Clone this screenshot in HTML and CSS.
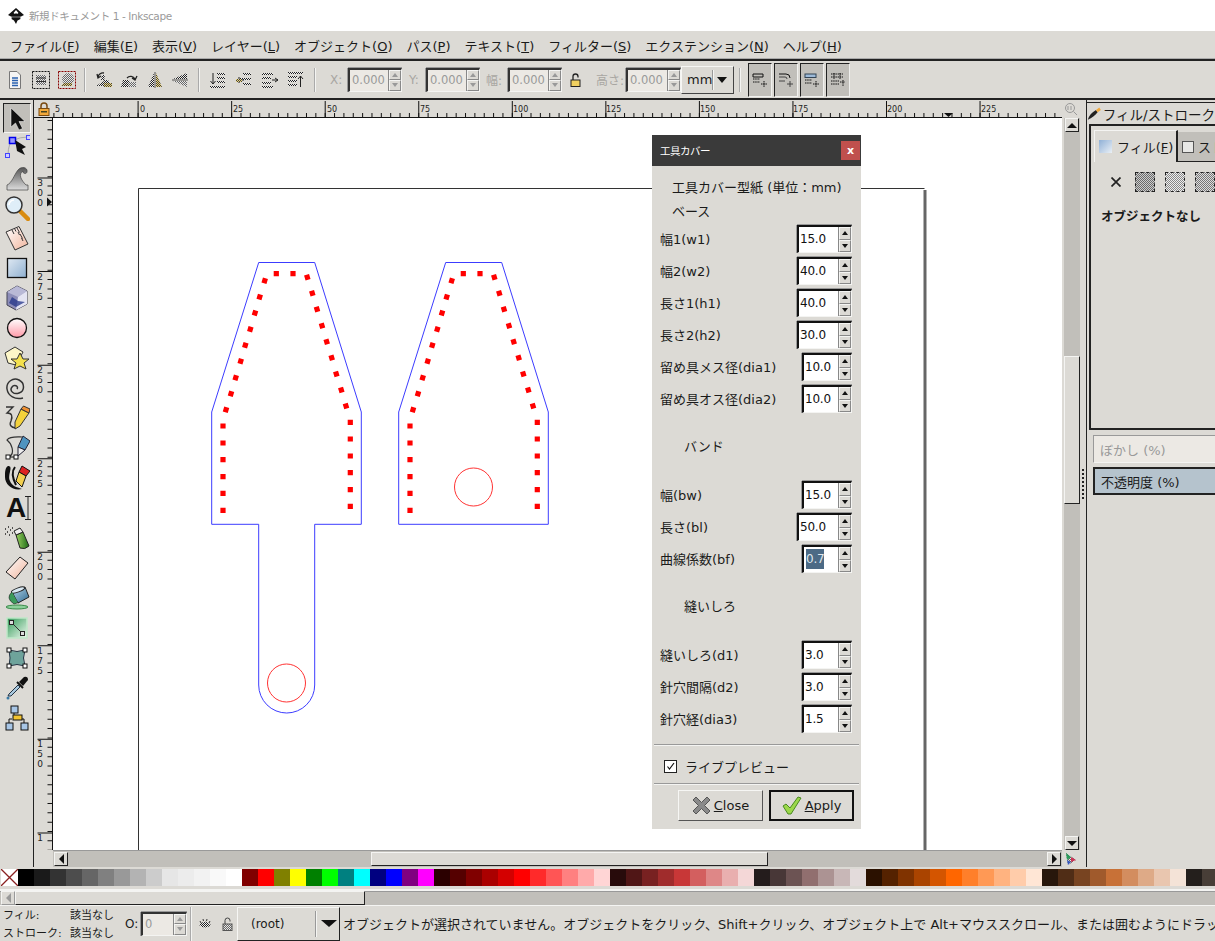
FILE: index.html
```html
<!DOCTYPE html>
<html lang="ja">
<head>
<meta charset="utf-8">
<title>新規ドキュメント 1 - Inkscape</title>
<link rel="stylesheet" href="styles.css">
</head>
<body>
<svg class="defs" width="0" height="0">
  <defs>
    <pattern id="dith" width="2" height="2" patternUnits="userSpaceOnUse"><rect width="2" height="2" fill="#eee"/><rect width="1" height="1" fill="#222"/><rect x="1" y="1" width="1" height="1" fill="#222"/></pattern>
    <pattern id="dithy" width="2" height="2" patternUnits="userSpaceOnUse"><rect width="2" height="2" fill="#f0d878"/><rect width="1" height="1" fill="#444"/><rect x="1" y="1" width="1" height="1" fill="#444"/></pattern>
    <pattern id="dithl" width="2" height="2" patternUnits="userSpaceOnUse"><rect width="2" height="2" fill="#e8e8e8"/><rect width="1" height="1" fill="#666"/><rect x="1" y="1" width="1" height="1" fill="#666"/></pattern>
    <linearGradient id="gBlue" x1="0" y1="0" x2="1" y2="1"><stop offset="0" stop-color="#dfe9f3"/><stop offset="1" stop-color="#8fb0d0"/></linearGradient>
    <linearGradient id="gPink" x1="0" y1="0" x2="0" y2="1"><stop offset="0" stop-color="#fff"/><stop offset="1" stop-color="#ff9aa8"/></linearGradient>
    <linearGradient id="gGray" x1="0" y1="0" x2="0" y2="1"><stop offset="0" stop-color="#555"/><stop offset="1" stop-color="#ddd"/></linearGradient>
    <linearGradient id="gSalmon" x1="0" y1="0" x2="1" y2="1"><stop offset="0" stop-color="#fff"/><stop offset="1" stop-color="#f0b49c"/></linearGradient>
    <linearGradient id="gGreen" x1="0" y1="0" x2="1" y2="1"><stop offset="0" stop-color="#2e9a55"/><stop offset="1" stop-color="#f0f8f0"/></linearGradient>
    <linearGradient id="gCan" x1="0" y1="0" x2="1" y2="0"><stop offset="0" stop-color="#9ad060"/><stop offset="1" stop-color="#1d6a16"/></linearGradient>
    <linearGradient id="gBucket" x1="0" y1="0" x2="1" y2="1"><stop offset="0" stop-color="#b8d8ec"/><stop offset="1" stop-color="#2f6a90"/></linearGradient>
  </defs>
</svg>

<header class="titlebar">
  <svg class="app-logo" width="16" height="16" viewBox="0 0 16 16"><path d="M8 0 L16 7 L12 9 L12.500 11 L9.500 12.500 L8 16 L6 12.500 L3.500 11 L4 9 L0 7 Z" fill="#111"/><path d="M8 2 L10.500 5 L9 6 L8 5 L7 6 L5.500 5 Z" fill="#fff"/><path d="M3 8.500 H13 V9.500 H3 Z" fill="#888"/></svg>
  <span class="title-text">新規ドキュメント 1 - Inkscape</span>
</header>

<nav class="menubar">
  <span>ファイル(<u>F</u>)</span><span>編集(<u>E</u>)</span><span>表示(<u>V</u>)</span><span>レイヤー(<u>L</u>)</span><span>オブジェクト(<u>O</u>)</span><span>パス(<u>P</u>)</span><span>テキスト(<u>T</u>)</span><span>フィルター(<u>S</u>)</span><span>エクステンション(<u>N</u>)</span><span>ヘルプ(<u>H</u>)</span>
</nav>

<div class="toolbar">
  <span class="ti"><svg width="16" height="18" viewBox="0 0 16 18"><path d="M2.500 .5 H10 L13.500 4 V17.500 H2.500 Z" fill="#f4f4f4" stroke="#777"/><path d="M5 7 H11 M5 9.500 H11 M5 12 H11 M5 14.500 H11" stroke="#2a62b0" stroke-width="1.400"/></svg></span>
  <span class="ti"><svg width="18" height="18" viewBox="0 0 18 18"><rect x=".5" y=".5" width="17" height="17" fill="none" stroke="#111" stroke-dasharray="2 1"/><path d="M4 4 H14 V14 H4 Z" fill="url(#dithl)"/><path d="M4 7 H14 M4 10.500 H14" stroke="#333"/></svg></span>
  <span class="ti"><svg width="18" height="18" viewBox="0 0 18 18"><rect x=".5" y=".5" width="17" height="17" fill="none" stroke="#800" stroke-dasharray="2 1"/><circle cx="10" cy="8" r="6" fill="url(#dithl)"/><path d="M3 15 H14 V12 H6 Z" fill="url(#dithy)"/></svg></span>
  <span class="tsep first"></span>
  <span class="ti alt"><svg width="18" height="18" viewBox="0 0 18 18"><path d="M1 15 H17 L13 9 H6 L7 4 H10 L9 10 Z" fill="url(#dith)"/><path d="M3 6 A5 5 0 0 1 9 2 M2 3 L3 7 L6 5" fill="none" stroke="#222" stroke-width="1.300"/><rect x="9" y="12" width="8" height="4" fill="url(#dithy)"/></svg></span>
  <span class="ti alt"><svg width="18" height="18" viewBox="0 0 18 18"><path d="M1 16 H11 L9 9 H3 Z" fill="url(#dith)"/><path d="M7 7 A5 5 0 0 1 15 8 M17 5 L15 9 L12 7" fill="none" stroke="#222" stroke-width="1.300"/><rect x="8" y="11" width="8" height="5" fill="url(#dithl)"/></svg></span>
  <span class="ti alt"><svg width="16" height="16" viewBox="0 0 16 16"><path d="M7 1 V15 H1 Z" fill="url(#dith)"/><path d="M9 1 V15 H15 Z" fill="url(#dithy)"/><path d="M8 0 V16" stroke="#555"/></svg></span>
  <span class="ti alt"><svg width="16" height="16" viewBox="0 0 16 16"><path d="M15 1 V7 H1 Z" fill="url(#dith)"/><path d="M15 15 V9 H1 Z" fill="url(#dithl)"/><path d="M0 8 H16" stroke="#555"/></svg></span>
  <span class="tsep second"></span>
  <span class="ti"><svg width="16" height="16" viewBox="0 0 16 16"><path d="M3 1 V12 M.5 9 L3 12 L5.500 9" fill="none" stroke="#222"/><path d="M7 1 H15 V3 H7 Z M7 5 H15 V7 H7 Z M7 9 H15 V11 H7 Z M0 14 H15 V16 H0 Z" fill="url(#dith)"/></svg></span>
  <span class="ti"><svg width="16" height="16" viewBox="0 0 16 16"><path d="M3 6 H15 V8 H3 Z M7 1 H15 V3 H7 Z M7 11 H15 V13 H7 Z" fill="url(#dith)"/><path d="M0 8 H8 M3 5 V11" stroke="#222"/><rect x="0" y="7" width="6" height="3" fill="url(#dithy)"/></svg></span>
  <span class="ti"><svg width="16" height="16" viewBox="0 0 16 16"><path d="M0 1 H11 V3 H0 Z M0 5 H9 V7 H0 Z M0 10 H9 V12 H0 Z M0 14 H11 V16 H0 Z" fill="url(#dith)"/><path d="M10 8 H16 M13 6 L16 8 L13 10" fill="none" stroke="#222"/></svg></span>
  <span class="ti"><svg width="16" height="16" viewBox="0 0 16 16"><path d="M0 0 H15 V2 H0 Z M0 4 H9 V6 H0 Z M0 8 H9 V10 H0 Z M0 12 H9 V14 H0 Z" fill="url(#dith)"/><path d="M12.500 15 V4 M10 7 L12.500 4 L15 7" fill="none" stroke="#222"/></svg></span>
  <span class="tsep third"></span>
  <span class="tlabel lx">X:</span>
  <span class="spin dis w54"><span class="val">0.000</span><span class="btns"><i class="up"></i><i class="dn"></i></span></span>
  <span class="tlabel ly">Y:</span>
  <span class="spin dis w54"><span class="val">0.000</span><span class="btns"><i class="up"></i><i class="dn"></i></span></span>
  <span class="tlabel lw">幅:</span>
  <span class="spin dis w54"><span class="val">0.000</span><span class="btns"><i class="up"></i><i class="dn"></i></span></span>
  <span class="tlock"><svg width="11" height="14" viewBox="0 0 11 14"><path d="M3 7 V3.500 A2.500 2.500 0 0 1 8 3.500 V4.500" fill="none" stroke="#222" stroke-width="1.300"/><rect x="1" y="7" width="9" height="6.500" fill="#f0d060" stroke="#222"/></svg></span>
  <span class="tlabel lh">高さ:</span>
  <span class="spin dis w55"><span class="val">0.000</span><span class="btns"><i class="up"></i><i class="dn"></i></span></span>
  <span class="unit"><span class="unit-text">mm</span><i class="unit-sep"></i><i class="tri-d big"></i></span>
  <span class="tsep fourth"></span>
  <span class="toggles">
    <span class="tog"><svg width="16" height="14" viewBox="0 0 16 14"><path d="M1 1 H11 V4 H1 Z" fill="none" stroke="#111"/><path d="M1 6 H8 M1 9 H8 M9 11 H15 M12 8 V14" stroke="#111" stroke-dasharray="1.500 .7"/></svg></span>
    <span class="tog"><svg width="16" height="14" viewBox="0 0 16 14"><path d="M1 1 H8 Q12 1 12 5" fill="none" stroke="#111"/><path d="M1 4 H7 Q9 4 9 6 M1 8 H7 M9 11 H15 M12 8 V14" fill="none" stroke="#444"/></svg></span>
    <span class="tog"><svg width="16" height="14" viewBox="0 0 16 14"><rect x="1" y="1" width="11" height="3.500" fill="#9dbad8" stroke="#345"/><path d="M1 7 H8 M1 10 H8 M9 11 H15 M12 8 V14" stroke="#111" stroke-dasharray="1.500 .7"/></svg></span>
    <span class="tog"><svg width="16" height="14" viewBox="0 0 16 14"><path d="M1 1 H13 M1 4 H13 M1 8 H9 M1 11 H9 M4 0 V6 M10 0 V6 M10 9 H15 M13 7 V13" stroke="#111" stroke-dasharray="1.500 .7"/></svg></span>
  </span>
</div>

<main class="workspace">
  <aside class="toolbox">
    <span class="tool active"><svg width="24" height="24" viewBox="0 0 24 24"><path d="M6 2 V21 L10.500 17 L14 24 L17.500 22.500 L14 15.500 L20 15.500 Z" fill="#111" stroke="#fff" stroke-width=".5"/></svg></span>
    <span class="tool"><svg width="26" height="26" viewBox="0 0 26 26"><path d="M4 21 Q4 7 10 5 Q16 2 24 2" fill="none" stroke="#aaa"/><rect x="1.500" y="18.500" width="4" height="4" fill="#cfcfff" stroke="#44f"/><rect x="22.500" y=".5" width="4" height="4" fill="#cfcfff" stroke="#44f"/><rect x="5.500" y="2.500" width="6" height="6" fill="#99f" stroke="#00e" stroke-width="1.500"/><path d="M11 5 L22 12 L18 14 L21 20 L13 16 Z" fill="#111"/></svg></span>
    <span class="tool"><svg width="26" height="26" viewBox="0 0 26 26"><path d="M3 25 V20 C8 18 10 10 14 5 C17 1 24 2 23 7 C22 10 18 8 19 6 C14 9 17 15 22 20 H24 V25 Z" fill="url(#gGray)" stroke="#444" stroke-width=".7"/></svg></span>
    <span class="tool"><svg width="26" height="26" viewBox="0 0 26 26"><path d="M15 15 L24 24" stroke="#d98c10" stroke-width="4.500" stroke-linecap="round"/><circle cx="10" cy="10" r="8" fill="#dfeef8" stroke="#333" stroke-width="1.500"/><path d="M5 10 A5 5 0 0 1 10 5" fill="none" stroke="#fff" stroke-width="1.500"/></svg></span>
    <span class="tool"><svg width="26" height="26" viewBox="0 0 26 26"><path d="M2 7 L15 1.500 L24 19 L11 25 Z" fill="url(#gSalmon)" stroke="#333"/><path d="M8 5 L10 9 M10.500 3.500 L12 6.500 M13 3 L15.500 7.500 M14 7 L15.500 10 M16 9 L18.500 13.500 M17.500 13 L19 16" stroke="#333" fill="none"/></svg></span>
    <span class="tool"><svg width="22" height="22" viewBox="0 0 22 22"><rect x="1.500" y="1.500" width="19" height="19" fill="url(#gBlue)" stroke="#111" stroke-width="1.300"/></svg></span>
    <span class="tool"><svg width="24" height="26" viewBox="0 0 24 26"><path d="M12 1 L22 6 V19 L11 25 L2 20 V7 Z" fill="#8d8db8" stroke="#445" /><path d="M12 1 L22 6 L13 12 L2 7 Z" fill="#b9b9d6"/><path d="M13 12 L22 6 V19 L11 25 Z" fill="#e4e4f2"/><path d="M7 12 L13 16 L20 17 L11 22 L4 18 Z" fill="#223388" opacity=".75"/></svg></span>
    <span class="tool"><svg width="22" height="22" viewBox="0 0 22 22"><circle cx="11" cy="11" r="9.500" fill="url(#gPink)" stroke="#111" stroke-width="1.300"/></svg></span>
    <span class="tool"><svg width="26" height="24" viewBox="0 0 26 24"><path d="M1 7 L11 1 L19 6 L12 19 L4 17 Z" fill="#fdf6c8" stroke="#333"/><path d="M16 7 L19 13 L25 13 L20 17 L22 23 L16 20 L10 23 L12 17 L7 13 L13 13 Z" fill="#f4e14e" stroke="#333"/></svg></span>
    <span class="tool"><svg width="24" height="24" viewBox="0 0 24 24"><path d="M12 13 C14 10 9 8 7 11 C4 15 9 19 14 17 C20 15 20 7 14 4 C8 1 1 6 2 13 C3 20 10 24 18 22" fill="none" stroke="#333" stroke-width="1.500"/></svg></span>
    <span class="tool"><svg width="26" height="26" viewBox="0 0 26 26"><path d="M2 2 H9 L3 8 Q10 8 7 16 Q4 22 12 23" fill="none" stroke="#333" stroke-width="1.400"/><path d="M17 4 L25 8 L16 21 L11 24 L11 17 Z" fill="#f4d23c" stroke="#333"/><path d="M17 4 L19.500 1 L26 4 L25 8 Z" fill="#f09030" stroke="#333"/></svg></span>
    <span class="tool"><svg width="26" height="26" viewBox="0 0 26 26"><path d="M5 22 C12 18 7 8 3 5 C6 1 14 2 18 2" fill="none" stroke="#333" stroke-width="1.200"/><rect x="2" y="20" width="4" height="4" fill="#fff" stroke="#111"/><rect x="10" y="20" width="4" height="4" fill="#fff" stroke="#111"/><path d="M6 22 H10" stroke="#111"/><path d="M19 1 L26 6 L21 15 L14 12 Z" fill="#4f94c0" stroke="#223"/><path d="M14 12 L21 15 L14 21 Z" fill="#eee" stroke="#223"/></svg></span>
    <span class="tool"><svg width="26" height="26" viewBox="0 0 26 26"><path d="M4 1 C10 1 3 10 6 16 C8 21 12 22 18 24 C9 26 1 20 1 12 C1 7 1 3 4 1 Z" fill="#111"/><path d="M11 2 C7 7 9 14 12 20" fill="none" stroke="#111" stroke-width="2"/><path d="M18 1 L26 6 L22 11 L15 7 Z" fill="#d22" stroke="#111"/><path d="M15 7 L22 11 L18 22 L12 16 Z" fill="#f2cf50" stroke="#111"/></svg></span>
    <span class="tool tool-a"><span class="a-glyph">A</span><svg class="ibeam" width="7" height="24" viewBox="0 0 7 24"><path d="M0 .5 H6 M0 23.500 H6 M3 0 V24" stroke="#222" fill="none"/></svg></span>
    <span class="tool"><svg width="26" height="24" viewBox="0 0 26 24"><path d="M1 3 H2 M4 1 H5 M6 4 H7 M3 6 H4 M8 7 H9 M5 9 H6 M8 2 H9 M1 8 H2" stroke="#222" stroke-width="1.500"/><path d="M12 9 L19 6 L25 20 Q21 24 16 22 Z" fill="url(#gCan)" stroke="#222"/><path d="M10 5 L16 2 L19 6 L12 9 Z" fill="#eee" stroke="#222"/></svg></span>
    <span class="tool"><svg width="24" height="24" viewBox="0 0 24 24"><path d="M1 16 L15 1 L23 7 L10 23 Z" fill="url(#gSalmon)" stroke="#222"/></svg></span>
    <span class="tool"><svg width="26" height="24" viewBox="0 0 26 24"><path d="M8 6 L21 1 L25 11 L14 17 Z" fill="url(#gBucket)" stroke="#222"/><ellipse cx="14" cy="4" rx="7" ry="2" fill="#d8e8f2" stroke="#222" transform="rotate(-20 14 4)"/><path d="M8 6 Q1 12 10 18 Q16 16 14 17" fill="#3a9a5a" stroke="#222" stroke-width=".6"/><ellipse cx="13" cy="21" rx="11" ry="2" fill="#8cd09a" stroke="#3a8a4a"/></svg></span>
    <span class="tool"><svg class="grad-ic" width="22" height="22" viewBox="0 0 22 22"><rect x="1" y="1" width="20" height="20" fill="url(#gGreen)" stroke="#bfe8c8" stroke-width="1.500"/><path d="M6 6 L16 16" stroke="#333"/><rect x="3.500" y="3.500" width="4" height="4" fill="#ddd" stroke="#222"/><rect x="14.500" y="14.500" width="4" height="4" fill="#ddd" stroke="#222"/></svg></span>
    <span class="tool"><svg width="24" height="24" viewBox="0 0 24 24"><path d="M4 4 Q12 7 20 4 Q17 12 20 20 Q12 17 4 20 Q6 12 4 4 Z" fill="#6ea39b" stroke="#234"/><rect x="2" y="2" width="4" height="4" fill="#fff" stroke="#111"/><rect x="18" y="2" width="4" height="4" fill="#fff" stroke="#111"/><rect x="2" y="18" width="4" height="4" fill="#fff" stroke="#111"/><rect x="18" y="18" width="4" height="4" fill="#fff" stroke="#111"/></svg></span>
    <span class="tool"><svg width="24" height="24" viewBox="0 0 24 24"><path d="M14 6 L19 1 Q23 0 23 4 L18 10 Z" fill="#111"/><path d="M12 6 L18 12" stroke="#111" stroke-width="2"/><path d="M13 9 L15 11 L6 20 L3 20 L4 18 Z" fill="#a9c8de" stroke="#234"/><circle cx="3" cy="22" r="1.500" fill="#3b7aa5"/></svg></span>
    <span class="tool"><svg width="24" height="26" viewBox="0 0 24 26"><rect x="6" y="1" width="7" height="7" fill="#a8c6e6" stroke="#111"/><rect x="1" y="18" width="7" height="7" fill="#a8c6e6" stroke="#111"/><rect x="16" y="18" width="7" height="7" fill="#a8c6e6" stroke="#111"/><path d="M9 8 V11 M4 18 V14 H7 M19 18 V14 H17" stroke="#111" fill="none"/><rect x="8" y="10" width="9" height="5" fill="#f4c430" stroke="#111"/></svg></span>
  </aside>

  <section class="canvasarea">
    <div class="corner"><svg width="12" height="14" viewBox="0 0 12 14"><path d="M3 7 V4 A3 3 0 0 1 9 4 V7" fill="none" stroke="#7a4a10" stroke-width="1.500"/><rect x="1" y="6.500" width="10" height="7" fill="#f2a93b" stroke="#7a4a10"/><rect x="3" y="9" width="6" height="1.500" fill="#442"/></svg></div>
    <svg class="hruler" width="1009" height="18" viewBox="53 100 1009 18">
      <line x1="44.050" y1="109" x2="1062" y2="109" stroke="#111" stroke-width="16" stroke-dasharray="1 92.550"/>
      <line x1="53.400" y1="115" x2="1062" y2="115" stroke="#111" stroke-width="4" stroke-dasharray="1 8.355"/>
      <line x1="53" y1="117.500" x2="1062" y2="117.500" stroke="#111"/>
      <g class="rnum"><text x="55" y="112">5</text><text x="140" y="112">0</text><text x="233" y="112">25</text><text x="327" y="112">50</text><text x="420" y="112">75</text><text x="513" y="112">100</text><text x="606" y="112">125</text><text x="700" y="112">150</text><text x="793" y="112">175</text><text x="887" y="112">200</text><text x="981" y="112">225</text></g>
      <path d="M944 113 H953 L948.500 117 Z" fill="#111"/>
    </svg>
    <div class="zoomcorner"><svg width="14" height="14" viewBox="0 0 14 14"><circle cx="6" cy="6" r="4.500" fill="none" stroke="#999"/><path d="M9.500 9.500 L13 13 M4 4 V8 M7 4 V8" stroke="#999"/></svg></div>
    <svg class="vruler" width="19" height="732" viewBox="34 118 19 732">
      <line x1="45" y1="84" x2="45" y2="850" stroke="#111" stroke-width="15" stroke-dasharray="1 92.550"/>
      <line x1="50" y1="120" x2="50" y2="850" stroke="#111" stroke-width="5" stroke-dasharray="1 8.355"/>
      <line x1="52.500" y1="118" x2="52.500" y2="850" stroke="#111"/>
      <g class="rnum vnum">
        <text x="40" y="186">3</text><text x="40" y="196">0</text><text x="40" y="206">0</text>
        <text x="40" y="280">2</text><text x="40" y="290">7</text><text x="40" y="300">5</text>
        <text x="40" y="373">2</text><text x="40" y="383">5</text><text x="40" y="393">0</text>
        <text x="40" y="467">2</text><text x="40" y="477">2</text><text x="40" y="487">5</text>
        <text x="40" y="560">2</text><text x="40" y="570">0</text><text x="40" y="580">0</text>
        <text x="40" y="654">1</text><text x="40" y="664">7</text><text x="40" y="674">5</text>
        <text x="40" y="747">1</text><text x="40" y="757">5</text><text x="40" y="767">0</text>
        <text x="40" y="841">1</text>
      </g>
      <path d="M47 197.500 L52 202 L47 206.500 Z" fill="#111"/>
    </svg>
    <div class="canvas">
      <svg class="drawing" width="1009" height="732" viewBox="53 118 1009 732">
        <path d="M138.500 850 V188.500 H924.500" fill="none" stroke="#333"/>
        <path d="M925 190 V850" stroke="#666" stroke-width="3"/>
        <path d="M258.700 262.500 H314.700 L361.300 412 V524.300 H314.700 V685 A28 28 0 0 1 258.700 685 V524.300 H211.700 V412 Z" fill="none" stroke="#3c3cff"/>
        <circle cx="286.500" cy="683" r="19" fill="none" stroke="#f33"/>
        <g id="stitches" fill="none" stroke="#f00" stroke-width="5.200">
          <path d="M276.300 271.100 v5.200 M293 271.100 v5.200 M350.300 419.700 v5.200 M350.300 436.400 v5.200 M350.300 453.400 v5.200 M350.300 470.100 v5.200 M350.300 487.100 v5.200 M350.300 503.700 v5.200 M223 423.400 v5.200 M223 440.400 v5.200 M223 457.100 v5.200 M223 474.100 v5.200 M223 490.700 v5.200 M223 507.700 v5.200"/>
          <path d="M306.550 274.750 l1.500 5.100 M311.550 290.750 l1.500 5.100 M316.250 306.750 l1.500 5.100 M321.250 323.150 l1.500 5.100 M325.950 339.150 l1.500 5.100 M330.950 355.150 l1.500 5.100 M335.550 371.450 l1.500 5.100 M340.550 387.450 l1.500 5.100 M345.250 403.450 l1.500 5.100"/>
          <path d="M265.450 278.150 l-1.500 5.100 M260.450 294.450 l-1.500 5.100 M255.750 310.450 l-1.500 5.100 M251.050 326.750 l-1.500 5.100 M246.050 342.750 l-1.500 5.100 M241.450 358.750 l-1.500 5.100 M236.450 375.150 l-1.500 5.100 M231.750 391.150 l-1.500 5.100 M226.750 407.150 l-1.500 5.100"/>
        </g>
        <path d="M445.700 262.500 H501.700 L548.300 412 V524.300 H398.700 V412 Z" fill="none" stroke="#3c3cff"/>
        <circle cx="473.500" cy="487" r="19" fill="none" stroke="#f33"/>
        <use href="#stitches" x="187" y="0"/>
      </svg>
    </div>
    <div class="vscroll">
      <span class="sbtn"><i class="tri-u"></i></span>
      <span class="vthumb"></span>
      <span class="sbtn"><i class="tri-d"></i></span>
    </div>
    <div class="blankcell"></div>
    <div class="hscroll">
      <span class="sbtn"><i class="tri-l"></i></span>
      <span class="hthumb"></span>
      <span class="sbtn"><i class="tri-r"></i></span>
    </div>
    <div class="cube"><svg width="12" height="14" viewBox="0 0 12 14"><path d="M1 1 L11 8 L3 13 Z" fill="url(#dithl)"/><path d="M1 1 L6 5 L2 8 Z" fill="#2a9a5a"/><path d="M6 5 L11 8 L6 10 Z" fill="#c35"/><path d="M2 8 L6 10 L3 13 Z" fill="#35b"/></svg></div>
  </section>

  <div class="grip"><i></i><i></i><i></i><i></i><i></i><i></i><i></i><i></i></div>

  <aside class="dock">
    <div class="dock-title">
      <svg width="18" height="16" viewBox="0 0 18 16"><path d="M1 15 C2 10 6 6 11 3 L13 6 C10 10 6 13 1 15 Z" fill="#222"/><path d="M11 3 L15 0 L17 3 L13 6 Z" fill="#f2a93b"/></svg>
      <span>フィル/ストローク</span>
    </div>
    <div class="dock-frame">
      <div class="tabs">
        <span class="tab on"><i class="swatch-fill"></i><span>フィル(<u>F</u>)</span></span>
        <span class="tab off"><i class="swatch-stroke"></i><span>ストローク</span></span>
      </div>
      <div class="tabpane">
        <div class="paints">
          <svg width="10" height="10" viewBox="0 0 10 10"><path d="M.5 .5 L9.500 9.500 M9.500 .5 L.5 9.500" stroke="#222" stroke-width="1.700"/></svg>
          <i class="paint p1"></i><i class="paint p2"></i><i class="paint p3"></i>
        </div>
        <div class="noobj">オブジェクトなし</div>
      </div>
    </div>
    <div class="slider blur">ぼかし (%)</div>
    <div class="slider opacity">不透明度 (%)</div>
  </aside>
</main>

<div class="palette">
  <span class="swatch none"><svg width="17" height="17" viewBox="0 0 17 17"><path d="M0 0 L17 17 M17 0 L0 17" stroke="#8a2020" stroke-width="1.300"/></svg></span>
  <i style="background:#000"></i><i style="background:#1a1a1a"></i><i style="background:#333"></i><i style="background:#4d4d4d"></i><i style="background:#666"></i><i style="background:#808080"></i><i style="background:#999"></i><i style="background:#b3b3b3"></i><i style="background:#ccc"></i><i style="background:#e6e6e6"></i><i style="background:#ececec"></i><i style="background:#f2f2f2"></i><i style="background:#f9f9f9"></i><i style="background:#fff"></i><i style="background:#800000"></i><i style="background:#f00"></i><i style="background:#808000"></i><i style="background:#ff0"></i><i style="background:#008000"></i><i style="background:#0f0"></i><i style="background:#008080"></i><i style="background:#0ff"></i><i style="background:#000080"></i><i style="background:#00f"></i><i style="background:#800080"></i><i style="background:#f0f"></i><i style="background:#2b0000"></i><i style="background:#500"></i><i style="background:#800000"></i><i style="background:#a00"></i><i style="background:#d40000"></i><i style="background:#f00"></i><i style="background:#ff2a2a"></i><i style="background:#f55"></i><i style="background:#ff8080"></i><i style="background:#faa"></i><i style="background:#ffd5d5"></i><i style="background:#280b0b"></i><i style="background:#501616"></i><i style="background:#782121"></i><i style="background:#a02c2c"></i><i style="background:#c83737"></i><i style="background:#d35f5f"></i><i style="background:#de8787"></i><i style="background:#e9afaf"></i><i style="background:#f4d7d7"></i><i style="background:#241c1c"></i><i style="background:#483737"></i><i style="background:#6c5353"></i><i style="background:#916f6f"></i><i style="background:#ac9393"></i><i style="background:#c8b7b7"></i><i style="background:#e3dbdb"></i><i style="background:#2b1100"></i><i style="background:#520"></i><i style="background:#803300"></i><i style="background:#a40"></i><i style="background:#d45500"></i><i style="background:#f60"></i><i style="background:#ff7f2a"></i><i style="background:#f95"></i><i style="background:#ffb380"></i><i style="background:#fca"></i><i style="background:#ffe6d5"></i><i style="background:#28170b"></i><i style="background:#502d16"></i><i style="background:#784421"></i><i style="background:#a05a2c"></i><i style="background:#c87137"></i><i style="background:#d38d5f"></i><i style="background:#deaa87"></i><i style="background:#e9c6af"></i><i style="background:#f4e3d7"></i><i style="background:#241f1c"></i><i style="background:#483e37"></i><i style="background:#6c5d53"></i>
</div>

<div class="palscroll">
  <span class="sbtn dim"><i class="tri-l"></i></span>
  <span class="pthumb"></span>
</div>

<footer class="statusbar">
  <div class="fs">
    <div class="fsrow"><span class="fsl">フィル:</span><span>該当なし</span></div>
    <div class="fsrow"><span class="fsl">ストローク:</span><span>該当なし</span></div>
  </div>
  <span class="olabel">O:</span>
  <span class="spin dis ospin"><span class="val">0</span><span class="btns"><i class="up"></i><i class="dn"></i></span></span>
  <span class="ssep"></span>
  <span class="sicon"><svg width="14" height="12" viewBox="0 0 14 12"><path d="M1 7 Q7 0 13 7 Q7 12 1 7 Z" fill="url(#dith)"/><path d="M2 3 L3 5 M5 1 L5.500 3 M9 1 L8.500 3 M12 3 L11 5" stroke="#333"/></svg></span>
  <span class="sicon second"><svg width="11" height="14" viewBox="0 0 11 14"><path d="M3 7 V3.500 A2.500 2.500 0 0 1 8 3.500 V4.500" fill="none" stroke="#444"/><rect x="1" y="7" width="9" height="6.500" fill="url(#dithl)" stroke="#555"/></svg></span>
  <span class="layer"><span class="layer-name">(root)</span><i class="unit-sep"></i><i class="tri-d big"></i></span>
  <span class="msg">オブジェクトが選択されていません。オブジェクトをクリック、Shift+クリック、オブジェクト上で Alt+マウススクロール、または囲むようにドラッグして選択します。</span>
</footer>

<div class="dialog">
  <div class="dlg-title"><span>工具カバー</span><span class="dlg-x">x</span></div>
  <div class="dlg-body">
    <div class="dhead">工具カバー型紙 (単位：mm)</div>
    <div class="dhead">ベース</div>
    <div class="drow"><span class="dlab">幅1(w1)</span><span class="spin w55"><span class="val">15.0</span><span class="btns"><i class="up"></i><i class="dn"></i></span></span></div>
    <div class="drow"><span class="dlab">幅2(w2)</span><span class="spin w55"><span class="val">40.0</span><span class="btns"><i class="up"></i><i class="dn"></i></span></span></div>
    <div class="drow"><span class="dlab">長さ1(h1)</span><span class="spin w55"><span class="val">40.0</span><span class="btns"><i class="up"></i><i class="dn"></i></span></span></div>
    <div class="drow"><span class="dlab">長さ2(h2)</span><span class="spin w55"><span class="val">30.0</span><span class="btns"><i class="up"></i><i class="dn"></i></span></span></div>
    <div class="drow"><span class="dlab">留め具メス径(dia1)</span><span class="spin w50"><span class="val">10.0</span><span class="btns"><i class="up"></i><i class="dn"></i></span></span></div>
    <div class="drow"><span class="dlab">留め具オス径(dia2)</span><span class="spin w50"><span class="val">10.0</span><span class="btns"><i class="up"></i><i class="dn"></i></span></span></div>
    <div class="dsect">バンド</div>
    <div class="drow"><span class="dlab">幅(bw)</span><span class="spin w50"><span class="val">15.0</span><span class="btns"><i class="up"></i><i class="dn"></i></span></span></div>
    <div class="drow"><span class="dlab">長さ(bl)</span><span class="spin w55"><span class="val">50.0</span><span class="btns"><i class="up"></i><i class="dn"></i></span></span></div>
    <div class="drow"><span class="dlab">曲線係数(bf)</span><span class="spin w50"><span class="val"><mark class="sel">0.7</mark></span><span class="btns"><i class="up"></i><i class="dn"></i></span></span></div>
    <div class="dsect">縫いしろ</div>
    <div class="drow"><span class="dlab">縫いしろ(d1)</span><span class="spin w50"><span class="val">3.0</span><span class="btns"><i class="up"></i><i class="dn"></i></span></span></div>
    <div class="drow"><span class="dlab">針穴間隔(d2)</span><span class="spin w50"><span class="val">3.0</span><span class="btns"><i class="up"></i><i class="dn"></i></span></span></div>
    <div class="drow"><span class="dlab">針穴経(dia3)</span><span class="spin w50"><span class="val">1.5</span><span class="btns"><i class="up"></i><i class="dn"></i></span></span></div>
    <div class="dsep lead"></div>
    <div class="dcheck"><span class="box"><svg width="9" height="9" viewBox="0 0 9 9"><path d="M1.500 4.500 L3.500 7 L8 1" fill="none" stroke="#111" stroke-width="1.200"/></svg></span><span>ライブプレビュー</span></div>
    <div class="dsep"></div>
    <div class="dbtns">
      <span class="btn"><svg width="19" height="19" viewBox="0 0 19 19"><path d="M1 4 L4 1 L9.500 6.500 L15 1 L18 4 L12.500 9.500 L18 15 L15 18 L9.500 12.500 L4 18 L1 15 L6.500 9.500 Z" fill="#8a8a8a" stroke="#555"/></svg><span><u>C</u>lose</span></span>
      <span class="btn def"><svg width="20" height="19" viewBox="0 0 20 19"><path d="M1 10 L4 8 L8 12 L16 1 L19 2 L9 18 L6 18 Z" fill="#9bd84a" stroke="#4a8a20"/></svg><span><u>A</u>pply</span></span>
    </div>
  </div>
</div>
</body>
</html>
```

FILE: styles.css
```css
* { box-sizing: border-box; }
html, body { margin: 0; padding: 0; }
body {
  width: 1215px;
  height: 941px;
  overflow: hidden;
  display: flex;
  flex-direction: column;
  position: relative;
  background: #dcdad5;
  color: #1a1a1a;
  font-family: "DejaVu Sans", "Noto Sans CJK JP", sans-serif;
  font-size: 13px;
}
i { display: block; font-style: normal; }
svg { display: block; }
.defs { position: absolute; }

.titlebar { height: 31px; flex: none; background: #fff; display: flex; align-items: center; padding-left: 8px; gap: 5px; }
.title-text { color: #9a9a9a; font-size: 10.5px; letter-spacing: -.4px; }

.menubar { height: 30px; flex: none; display: flex; align-items: center; gap: 14px; padding-left: 10px; border-bottom: 2px solid #222; box-shadow: inset 0 -1px 0 #aaa; font-size: 13px; white-space: nowrap; }

.toolbar { height: 39px; flex: none; display: flex; align-items: center; padding-left: 2px; border-bottom: 2px solid #222; background: #dcdad5; }
.ti { width: 26px; height: 24px; flex: none; display: flex; align-items: center; justify-content: center; }
.ti.alt { width: 25.5px; }
.tsep { width: 2px; height: 24px; flex: none; background: #f4f4f2; border-left: 1px solid #aaa; }
.tsep.first { margin: 0 5px 0 4px; }
.tsep.second { margin: 0 5px; }
.tsep.third { margin: 0 0 0 5px; }
.tsep.fourth { margin: 0 7px 0 5px; }
.tlabel { flex: none; color: #a8a6a2; font-size: 12px; }
.lx { width: 32px; padding-left: 14px; }
.ly { width: 24px; padding-left: 7px; }
.lw { width: 28px; padding-left: 6px; }
.lh { width: 38px; padding-left: 8px; }
.tlock { width: 26px; flex: none; display: flex; justify-content: center; }
.unit { width: 53px; height: 28px; flex: none; display: flex; align-items: center; padding-left: 5px; background: #dcdad5; border: 1px solid; border-color: #f6f6f4 #444 #444 #f6f6f4; font-size: 13px; }
.unit-sep { width: 2px; height: 20px; flex: none; background: #f4f4f2; border-left: 1px solid #999; margin: 0 3px 0 0; }
.unit-text { width: 25px; flex: none; }
.tri-d.big { border-width: 6px 5px 0; }
.toggles { display: flex; gap: 2px; }
.tog { width: 24px; height: 34px; display: flex; align-items: center; justify-content: center; background: #c1bfba; border: 1px solid; border-color: #222 #f0f0ee #f0f0ee #222; }

.spin { height: 28px; flex: none; display: flex; background: #fff; border: 1px solid; border-color: #999 #f4f4f2 #f4f4f2 #999; border-left: 2px solid #111; border-top: 2px solid #111; box-shadow: 0 -1px 0 #999, -1px 0 0 #999; }
.w50 { width: 50px; }
.w54 { width: 54px; }
.w55 { width: 55px; }
.val { flex: 1; min-width: 0; padding-left: 1px; font-size: 12px; line-height: 25px; color: #111; letter-spacing: -.2px; }
.btns { width: 13px; flex: none; display: flex; flex-direction: column; background: #dcdad5; border-left: 1px solid #888; }
.btns i { flex: 1; display: flex; align-items: center; justify-content: center; border: 1px solid; border-color: #f4f4f2 #888 #888 #f4f4f2; }
.btns i::after { content: ""; border-left: 3px solid transparent; border-right: 3px solid transparent; }
.btns .up::after { border-bottom: 4px solid #111; }
.btns .dn::after { border-top: 4px solid #111; }
.spin.dis { background: #ece9e4; height: 24px; border-left-color: #333; border-top-color: #333; }
.spin.dis .val { color: #999; font-size: 11.5px; line-height: 21px; letter-spacing: 0; padding-left: 2px; }
.spin.dis .btns .up::after { border-bottom-color: #999; }
.spin.dis .btns .dn::after { border-top-color: #999; }

.tri-u, .tri-d, .tri-l, .tri-r { width: 0; height: 0; flex: none; border-style: solid; border-color: transparent; }
.tri-u { border-width: 0 5px 5px; border-bottom-color: #111; }
.tri-d { border-width: 5px 5px 0; border-top-color: #111; }
.tri-l { border-width: 5px 5px 5px 0; border-right-color: #111; }
.tri-r { border-width: 5px 0 5px 5px; border-left-color: #111; }

.workspace { height: 767px; flex: none; display: flex; }
.toolbox { width: 34px; flex: none; border-right: 1px solid #222; display: flex; flex-direction: column; padding-top: 3px; align-items: stretch; }
.tool { height: 30px; flex: none; display: flex; align-items: center; justify-content: center; position: relative; }
.tool.active { background: #c1bfba; margin: 0 2px 0 3px; border: 1px solid; border-color: #222 #f4f4f2 #f4f4f2 #222; }
.tool-a { justify-content: flex-start; padding-left: 6px; }
.a-glyph { font-family: "Liberation Sans", sans-serif; font-weight: bold; font-size: 28px; line-height: 30px; color: #111; }
.ibeam { margin-left: -1px; }

.canvasarea { width: 1046px; flex: none; display: grid; grid-template-columns: 19px 1009px 18px; grid-template-rows: 18px 732px 17px; }
.corner { display: flex; align-items: center; padding-left: 4px; border-bottom: 1px solid #111; }
.rnum text { font-size: 8px; fill: #222; font-family: "DejaVu Sans", sans-serif; }
.vnum text { text-anchor: middle; font-size: 9px; }
.zoomcorner { display: flex; justify-content: center; align-items: center; }
.canvas { background: #fff; overflow: hidden; }
.vscroll { background: #c1bfba; display: flex; flex-direction: column; align-items: center; position: relative; width: 16px; margin-left: 2px; }
.sbtn { width: 14px; height: 14px; flex: none; display: flex; align-items: center; justify-content: center; background: #dcdad5; border: 1px solid; border-color: #f4f4f2 #222 #222 #f4f4f2; }
.sbtn.dim { border-color: #f4f4f2 #999 #999 #f4f4f2; }
.sbtn.dim .tri-l { border-right-color: #999; }
.vscroll .vthumb { width: 16px; height: 148px; margin: 224px 0 auto; background: #dcdad5; border: 1px solid; border-color: #f4f4f2 #222 #222 #f4f4f2; }
.hscroll { background: #c1bfba; display: flex; align-items: center; padding: 1px 1px 2px 1px; border-top: 1px solid #999; }
.hthumb { width: 397px; height: 14px; margin-left: 303px; margin-right: auto; background: #dcdad5; border: 1px solid; border-color: #f4f4f2 #222 #222 #f4f4f2; }
.cube { display: flex; align-items: center; justify-content: center; }

.grip { width: 7px; flex: none; display: flex; flex-direction: column; align-items: center; justify-content: flex-start; gap: 2px; padding-top: 369px; border-right: 1px solid #222; }
.grip i { width: 2px; height: 2px; background: #222; }

.dock { flex: 1; min-width: 0; overflow: hidden; padding-top: 2px; }
.dock-title { height: 22px; display: flex; align-items: center; gap: 1px; white-space: nowrap; border-top: 1px solid #222; font-size: 13.5px; }
.dock-frame { margin-left: 2px; width: 200px; height: 306px; border: 2px solid #222; border-right: 0; border-radius: 1px; padding: 4px 0 0 3px; }
.tabs { display: flex; height: 32px; font-size: 13px; }
.tab { display: flex; align-items: center; white-space: nowrap; }
.tab.on { width: 84px; flex: none; gap: 5px; padding-left: 4px; border-top: 1px solid #f4f4f2; border-left: 1px solid #f4f4f2; border-right: 2px solid #222; }
.tab.off { flex: 1; background: #c1bfba; gap: 4px; padding-left: 4px; margin-top: 2px; border-bottom: 1px solid #222; }
.swatch-fill { width: 13px; height: 13px; flex: none; background: linear-gradient(135deg, #8fb0d6, #eaf0f6); }
.swatch-stroke { width: 12px; height: 12px; flex: none; border: 1px solid #555; background: #e8e8e6; }
.paints { display: flex; align-items: center; gap: 10px; padding: 10px 0 0 17px; }
.paints svg { margin-right: 4px; }
.paint { width: 20px; height: 20px; border: 1px dashed #222; flex: none; }
.p1 { background: repeating-conic-gradient(#6a6a6a 0 25%, #ccc 0 50%) 0 0 / 2px 2px; }
.p2 { background: repeating-conic-gradient(#888 0 25%, #eee 0 50%) 0 0 / 2px 2px; }
.p3 { background: repeating-conic-gradient(#777 0 25%, #ddd 0 50%) 0 0 / 2px 2px; }
.noobj { font-weight: bold; padding: 14px 0 0 7px; font-size: 12.5px; white-space: nowrap; }
.slider { margin-left: 6px; width: 200px; height: 28px; display: flex; align-items: center; padding-left: 6px; border: 1px solid; font-size: 13px; }
.blur { margin-top: 5px; background: #ece9e4; color: #999; border-color: #999 #f4f4f2 #f4f4f2 #999; }
.opacity { margin-top: 4px; background: #b5c3cd; border: 2px solid #222; border-right: 0; }

.palette { height: 22px; flex: none; display: flex; padding: 2px 0 3px 1px; overflow: hidden; }
.palette i { width: 16px; flex: none; height: 17px; }
.swatch.none { width: 17px; height: 17px; flex: none; background: #fff; }
.palscroll { height: 17px; flex: none; display: flex; align-items: center; background: #c1bfba; padding-left: 1px; border-top: 2px solid #f4f4f2; border-bottom: 1px solid #f4f4f2; box-shadow: inset 0 1px 0 #999; }
.pthumb { width: 350px; height: 14px; background: #dcdad5; border: 1px solid; border-color: #f4f4f2 #222 #222 #f4f4f2; }

.statusbar { flex: 1; min-height: 0; display: flex; align-items: center; white-space: nowrap; overflow: hidden; }
.fs { width: 122px; flex: none; padding: 2px 0 0 3px; font-size: 11px; line-height: 18px; }
.fsrow { display: flex; }
.fsl { width: 67px; }
.olabel { width: 19px; flex: none; font-size: 12px; padding-left: 3px; }
.ospin { width: 46px; }
.ssep { width: 2px; height: 34px; flex: none; margin-left: 3px; background: #f4f4f2; border-left: 1px solid #aaa; }
.sicon { width: 16px; flex: none; display: flex; justify-content: center; margin-left: 5px; }
.sicon.second { margin-left: 6px; }
.layer { width: 103px; height: 34px; flex: none; margin-left: 2px; display: flex; align-items: center; padding-left: 13px; background: #dcdad5; border: 1px solid; border-color: #f6f6f4 #222 #222 #f6f6f4; font-size: 12px; }
.layer-name { width: 64px; flex: none; }
.layer .unit-sep { height: 26px; margin: 0 4px 0 0; }
.layer .tri-d.big { border-width: 7px 8px 0; }
.msg { margin-left: 3px; font-size: 13px; }

.dialog { position: absolute; left: 652px; top: 135px; width: 209px; height: 694px; background: #dcdad5; }
.dlg-title { height: 31px; background: #3a3a3a; color: #fff; display: flex; align-items: center; justify-content: space-between; padding: 0 1px 0 8px; font-size: 10.5px; letter-spacing: -.5px; }
.dlg-x { width: 19px; height: 19px; background: #c0504d; color: #fff; display: flex; align-items: center; justify-content: center; font-size: 11px; font-weight: bold; line-height: 1; letter-spacing: 0; }
.dlg-body { padding-top: 9px; }
.dhead { height: 24px; display: flex; align-items: center; padding: 0 0 2px 20px; white-space: nowrap; }
.dsect { height: 64px; display: flex; align-items: center; padding: 0 0 3px 32px; }
.drow { height: 32px; display: flex; align-items: center; justify-content: space-between; padding: 0 9px 0 8px; white-space: nowrap; }
.dlab { margin-top: -2px; }
.sel { background: #4c6a85; color: #dfe6ec; display: inline-block; line-height: 20px; margin-left: 1px; }
.dsep { height: 2px; margin: 0 2px; background: #f4f4f2; border-top: 1px solid #999; }
.dsep.lead { margin-top: 9px; }
.dcheck { height: 37px; display: flex; align-items: center; padding: 3px 0 0 12px; gap: 8px; }
.box { width: 13px; height: 13px; background: #fff; border: 1px solid #222; display: flex; align-items: center; justify-content: center; }
.dbtns { display: flex; gap: 6px; padding: 5px 0 0 26px; }
.btn { width: 85px; height: 31px; display: flex; align-items: center; justify-content: center; gap: 3px; background: #dcdad5; border: 1px solid; border-color: #f6f6f4 #555 #555 #f6f6f4; font-size: 13px; }
.btn.def { border: 2px solid #111; }
```
